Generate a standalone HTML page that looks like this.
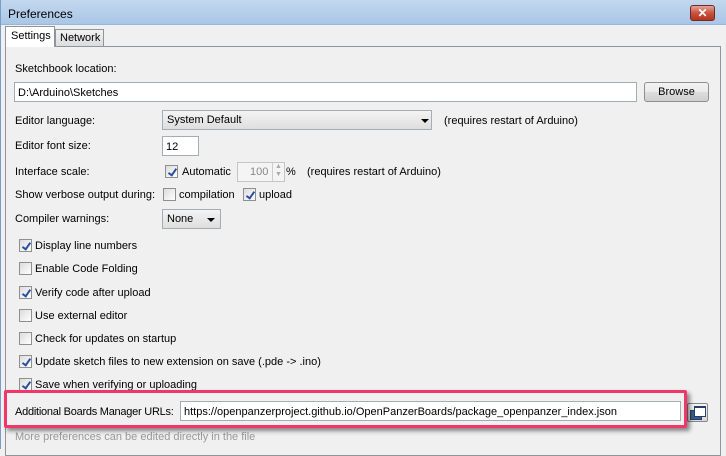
<!DOCTYPE html>
<html><head><meta charset="utf-8"><style>
*{margin:0;padding:0;box-sizing:border-box}
body{width:726px;height:449px;overflow:hidden;background:#f0f0f0;font:11px "Liberation Sans",Tahoma,sans-serif;color:#000;position:relative}
.a{position:absolute;white-space:nowrap}
.t{margin-top:1px}
.title{left:0;top:0;width:726px;height:25px;background:linear-gradient(#c3d8ee,#a9c6e6);border-bottom:1px solid #9ab6d6}
.close{left:690px;top:5px;width:25px;height:16px;border:1px solid #6d2b24;border-radius:3px;background:linear-gradient(#e6a49a,#c9523f 50%,#b43520);color:#fff;font:bold 12px "Liberation Sans";text-align:center;line-height:14px}
.inp{background:#fff;border:1px solid #a5acb5;height:20px;padding:3px 3px 1px;line-height:14px}
.btn{border:1px solid #8e8f8f;border-radius:3px;background:linear-gradient(#f2f2f2,#ebebeb 50%,#dddddd 51%,#cfcfcf);text-align:center;line-height:19px}
.sel{border:1px solid #a5acb5;background:linear-gradient(#f4f4f4,#dedede);padding-left:4px;line-height:19px;height:20px}
.arr{position:absolute;width:0;height:0;border-left:4px solid transparent;border-right:4px solid transparent;border-top:4px solid #000}
.cb{width:13px;height:13px;border:1px solid #8f8f8f;background:linear-gradient(135deg,#dcdcdc,#fff)}
.cb.c::after{content:"";position:absolute;left:4px;top:1px;width:3px;height:7px;border:solid #2a4f9f;border-width:0 2px 2px 0;transform:rotate(35deg)}
</style></head><body>
<div class="a title"></div>
<div class="a" style="left:0;top:0;width:1px;height:449px;background:#7a9cc9"></div>
<div class="a" style="left:8px;top:7px;font-size:12px">Preferences</div>
<div class="a close">✕</div>
<div class="a" style="left:1px;top:25px;width:725px;height:424px;background:#f0f0f0"></div>
<div class="a" style="left:5px;top:46px;width:716px;height:410px;border:1px solid #8e959d;background:#f0f0f0"></div>
<div class="a" style="left:55px;top:29px;width:49px;height:18px;border:1px solid #8e959d;background:linear-gradient(#f2f2f2,#dcdcdc);padding-left:4px;line-height:17px">Network</div>
<div class="a" style="left:5px;top:26px;width:50px;height:21px;border:1px solid #8e959d;border-bottom:none;background:#fff;padding-left:5px;line-height:19px">Settings</div>

<div class="a t" style="left:15px;top:62px">Sketchbook location:</div>
<div class="a inp" style="left:14px;top:82px;width:623px">D:\Arduino\Sketches</div>
<div class="a btn" style="left:644px;top:82px;width:65px;height:20px">Browse</div>

<div class="a t" style="left:15px;top:114px">Editor language:</div>
<div class="a sel" style="left:162px;top:110px;width:270px">System Default<span class="arr" style="left:258px;top:8px"></span></div>
<div class="a t" style="left:444px;top:114px">(requires restart of Arduino)</div>

<div class="a t" style="left:15px;top:139px">Editor font size:</div>
<div class="a inp" style="left:162px;top:136px;width:37px">12</div>

<div class="a t" style="left:15px;top:165px">Interface scale:</div>
<div class="a cb c" style="left:165px;top:165px"></div>
<div class="a t" style="left:182px;top:165px">Automatic</div>
<div class="a" style="left:237px;top:162px;width:48px;height:20px;border:1px solid #c5c5c5;background:#f4f4f4;color:#888;padding:3px 0 0 12px">100</div>
<div class="a" style="left:272px;top:163px;width:12px;height:18px;border-left:1px solid #ccc;color:#aaa;font-size:7px;line-height:8px;text-align:center">▲<br>▼</div>
<div class="a t" style="left:286px;top:165px">%</div>
<div class="a t" style="left:307px;top:165px">(requires restart of Arduino)</div>

<div class="a t" style="left:15px;top:188px">Show verbose output during:</div>
<div class="a cb" style="left:163px;top:188px"></div>
<div class="a t" style="left:179px;top:188px">compilation</div>
<div class="a cb c" style="left:243px;top:188px"></div>
<div class="a t" style="left:259px;top:188px">upload</div>

<div class="a t" style="left:15px;top:212px">Compiler warnings:</div>
<div class="a sel" style="left:162px;top:209px;width:59px">None<span class="arr" style="left:44px;top:8px"></span></div>

<div class="a cb c" style="left:19px;top:239px"></div><div class="a t" style="left:35px;top:239px">Display line numbers</div>
<div class="a cb" style="left:19px;top:262px"></div><div class="a t" style="left:35px;top:262px">Enable Code Folding</div>
<div class="a cb c" style="left:19px;top:286px"></div><div class="a t" style="left:35px;top:286px">Verify code after upload</div>
<div class="a cb" style="left:19px;top:309px"></div><div class="a t" style="left:35px;top:309px">Use external editor</div>
<div class="a cb" style="left:19px;top:332px"></div><div class="a t" style="left:35px;top:332px">Check for updates on startup</div>
<div class="a cb c" style="left:19px;top:355px"></div><div class="a t" style="left:35px;top:355px">Update sketch files to new extension on save (.pde -&gt; .ino)</div>
<div class="a cb c" style="left:19px;top:378px"></div><div class="a t" style="left:35px;top:378px">Save when verifying or uploading</div>

<div class="a t" style="left:15px;top:405px;letter-spacing:-0.25px">Additional Boards Manager URLs:</div>
<div class="a inp" style="left:180px;top:401px;width:501px">https://openpanzerproject.github.io/OpenPanzerBoards/package_openpanzer_index.json</div>
<div class="a" style="left:687px;top:403px;width:21px;height:19px;border:1px solid #888;border-radius:2px;background:linear-gradient(#f4f4f4,#d8d8d8)">
<div class="a" style="left:2px;top:6px;width:12px;height:10px;background:#3b5a8a;border:1px solid #24406a"></div>
<div class="a" style="left:6px;top:2px;width:12px;height:11px;background:#fff;border:1px solid #24406a;border-top-width:2px"></div></div>
<div class="a t" style="left:15px;top:430px;color:#999">More preferences can be edited directly in the file</div>

<div class="a" style="left:4px;top:390px;width:683px;height:38px;border:3px solid #f0366a;border-radius:2px;box-shadow:3px 3px 4px rgba(0,0,0,.45)"></div>
</body></html>
